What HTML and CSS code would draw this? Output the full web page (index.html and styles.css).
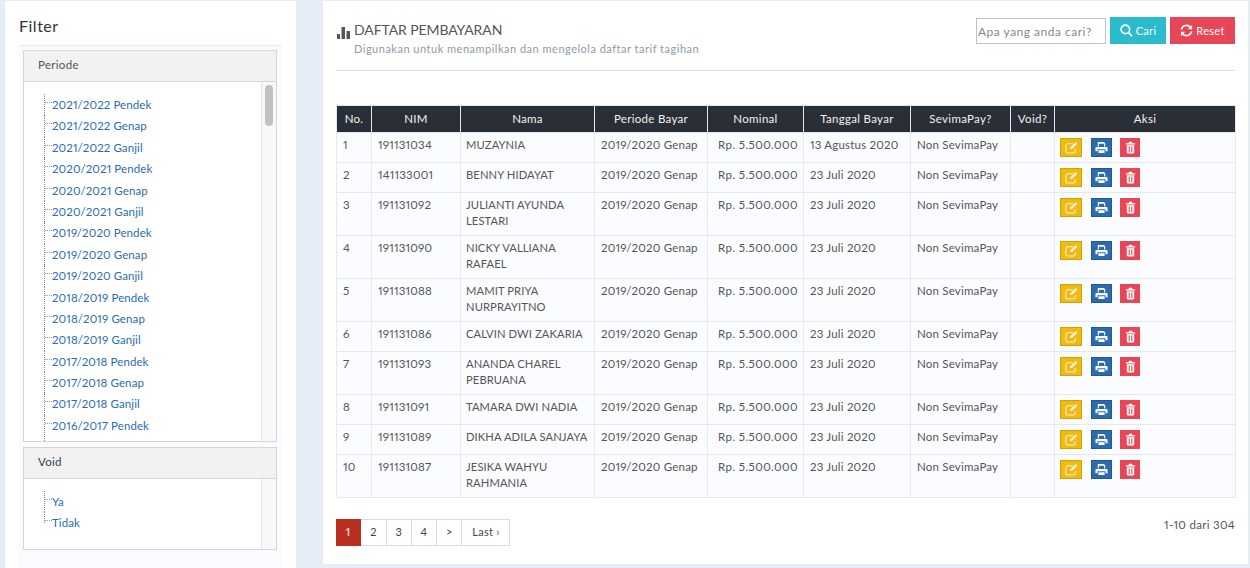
FILE: index.html
```html
<!DOCTYPE html>
<html lang="id">
<head>
    <meta charset="UTF-8">
    <title>Daftar Pembayaran</title>
    <link rel="stylesheet" href="styles.css">
</head>
<body>
    <svg class="defs" width="0" height="0">
        <symbol id="i-chart" viewBox="0 0 14 14"><path d="M0 9h3v5H0zM4.500 2h3.500v12H4.500zM9.500 6h3.500v8H9.500z"/></symbol>
        <symbol id="i-search" viewBox="0 0 14 14"><path fill="none" stroke="currentColor" stroke-width="1.800" d="M5.800 1.200a4.600 4.600 0 1 0 0 9.200a4.600 4.600 0 1 0 0-9.200zM9.200 9.200l3.800 3.800"/></symbol>
        <symbol id="i-refresh" viewBox="0 0 14 14"><path fill="none" stroke="currentColor" stroke-width="1.700" d="M1.500 6a5.600 5.600 0 0 1 9.800-2.400M12.500 8a5.600 5.600 0 0 1-9.800 2.400"/><path d="M13 1v4.600H8.400zM1 13V8.400h4.600z"/></symbol>
        <symbol id="i-edit" viewBox="0 0 14 14"><path fill="none" stroke="currentColor" stroke-width="1.100" d="M11 8.500V11a2 2 0 0 1-2 2H3a2 2 0 0 1-2-2V5a2 2 0 0 1 2-2h5.500"/><path d="M11.600 1.200l1.700 1.700l-5.800 5.800H5.500V7z"/></symbol>
        <symbol id="i-print" viewBox="0 0 14 14"><path d="M3 1h6.500L11 2.500V6H9.800V3H4.200v3H3zM1.500 6.500h11a1 1 0 0 1 1 1V11h-2.200V9H2.700v2H.5V7.500a1 1 0 0 1 1-1zM3.700 10h6.600v3H3.700z"/></symbol>
        <symbol id="i-trash" viewBox="0 0 14 14"><path d="M5.500 .8h3l.7 1.700H12v1.300H2V2.500h2.800zM3 4.600h8V12a1.500 1.500 0 0 1-1.500 1.500h-5A1.500 1.500 0 0 1 3 12zM5 6v6h1.200V6zM7.800 6v6H9V6z"/></symbol>
    </svg>

    <div class="page">
        <aside class="sidebar">
            <h2 class="filter-title">Filter</h2>
            <div class="filter-body">
                <div class="filter-box">
                    <div class="filter-head">Periode</div>
                    <div class="filter-main filter-main-period">
                        <ul class="tree tree-more">
                            <li><a>2021/2022 Pendek</a></li>
                            <li><a>2021/2022 Genap</a></li>
                            <li><a>2021/2022 Ganjil</a></li>
                            <li><a>2020/2021 Pendek</a></li>
                            <li><a>2020/2021 Genap</a></li>
                            <li><a>2020/2021 Ganjil</a></li>
                            <li><a>2019/2020 Pendek</a></li>
                            <li><a>2019/2020 Genap</a></li>
                            <li><a>2019/2020 Ganjil</a></li>
                            <li><a>2018/2019 Pendek</a></li>
                            <li><a>2018/2019 Genap</a></li>
                            <li><a>2018/2019 Ganjil</a></li>
                            <li><a>2017/2018 Pendek</a></li>
                            <li><a>2017/2018 Genap</a></li>
                            <li><a>2017/2018 Ganjil</a></li>
                            <li><a>2016/2017 Pendek</a></li>
                        </ul>
                        <div class="scroll-track"><div class="scroll-thumb"></div></div>
                    </div>
                </div>
                <div class="filter-box filter-box-void">
                    <div class="filter-head filter-head-void">Void</div>
                    <div class="filter-main filter-main-void">
                        <ul class="tree tree-end">
                            <li><a>Ya</a></li>
                            <li><a>Tidak</a></li>
                        </ul>
                        <div class="scroll-track"></div>
                    </div>
                </div>
            </div>
        </aside>

        <main class="content">
            <div class="content-head">
                <div>
                    <h1 class="page-title"><svg class="icon-chart"><use href="#i-chart"/></svg>DAFTAR PEMBAYARAN</h1>
                    <p class="page-sub">Digunakan untuk menampilkan dan mengelola daftar tarif tagihan</p>
                </div>
                <div class="search">
                    <input class="search-input" type="text" placeholder="Apa yang anda cari?">
                    <button class="btn btn-cari"><svg class="icon"><use href="#i-search"/></svg>Cari</button>
                    <button class="btn btn-reset"><svg class="icon"><use href="#i-refresh"/></svg>Reset</button>
                </div>
            </div>

            <table class="data">
                <colgroup>
                    <col class="c-no"><col class="c-nim"><col class="c-nama"><col class="c-periode"><col class="c-nominal"><col class="c-tanggal"><col class="c-sevima"><col class="c-void"><col class="c-aksi">
                </colgroup>
                <thead>
                    <tr><th>No.</th><th>NIM</th><th>Nama</th><th>Periode Bayar</th><th>Nominal</th><th>Tanggal Bayar</th><th>SevimaPay?</th><th>Void?</th><th>Aksi</th></tr>
                </thead>
                <tbody id="rows"></tbody>
            </table>

            <div class="table-foot">
                <ul class="pager">
                    <li class="active">1</li>
                    <li>2</li>
                    <li>3</li>
                    <li>4</li>
                    <li>&gt;</li>
                    <li class="pager-last">Last ›</li>
                </ul>
                <div class="count">1-10 dari 304</div>
            </div>
        </main>
    </div>

    <script>
    let data = [
        ["191131034", "MUZAYNIA", "13 Agustus 2020"],
        ["141133001", "BENNY HIDAYAT", "23 Juli 2020"],
        ["191131092", "JULIANTI AYUNDA LESTARI", "23 Juli 2020"],
        ["191131090", "NICKY VALLIANA RAFAEL", "23 Juli 2020"],
        ["191131088", "MAMIT PRIYA NURPRAYITNO", "23 Juli 2020"],
        ["191131086", "CALVIN DWI ZAKARIA", "23 Juli 2020"],
        ["191131093", "ANANDA CHAREL PEBRUANA", "23 Juli 2020"],
        ["191131091", "TAMARA DWI NADIA", "23 Juli 2020"],
        ["191131089", "DIKHA ADILA SANJAYA", "23 Juli 2020"],
        ["191131087", "JESIKA WAHYU RAHMANIA", "23 Juli 2020"]
    ];
    let html = "";
    data.forEach(function (r, i) {
        html += "<tr><td>" + (i + 1) + "</td><td>" + r[0] + "</td><td class='name'>" + r[1] + "</td>"
            + "<td>2019/2020 Genap</td><td class='num'>Rp. 5.500.000</td><td>" + r[2] + "</td>"
            + "<td>Non SevimaPay</td><td></td><td class='aksi'><div class='actions'>"
            + "<span class='act act-edit'><svg><use href='#i-edit'/></svg></span>"
            + "<span class='act act-print'><svg><use href='#i-print'/></svg></span>"
            + "<span class='act act-del'><svg><use href='#i-trash'/></svg></span>"
            + "</div></td></tr>";
    });
    document.getElementById("rows").innerHTML = html;
    </script>
</body>
</html>
```

FILE: styles.css
```css
* {
    box-sizing: border-box;
}
html, body {
    height: 568px;
    overflow: hidden;
}
body {
    margin: 0;
    background-color: #e6edf7;
    font-family: 'Lato', sans-serif;
    font-size: 11.500px;
    font-variant-numeric: proportional-nums;
    letter-spacing: 0.3px;
    color: #555;
}
.defs {
    position: absolute;
}
.page {
    display: flex;
    gap: 27px;
    padding: 1px 2px 0 5px;
}

/* filter kiri */
.sidebar {
    width: 291px;
    height: 567px;
    background: white;
    padding: 0 14px;
}
.filter-title {
    margin: 0;
    height: 45px;
    padding-top: 15px;
    border-bottom: 1px solid #e6e8ec;
    font-size: 16px;
    line-height: 20px;
    font-weight: 400;
    letter-spacing: 0.5px;
    color: #333;
}
.filter-body {
    background: #fafbfe;
    height: 522px;
    padding: 4px 5px 0 4px;
}
.filter-box {
    border: 1px solid #d6d6d6;
    background: white;
}
.filter-box-void {
    margin-top: 5px;
}
.filter-head {
    height: 31px;
    padding-left: 14px;
    background: #f2f2f2;
    border-bottom: 1px solid #d6d6d6;
    line-height: 28px;
    color: #555;
}
.filter-head-void {
    color: #2c3e50;
}
.filter-main {
    display: flex;
    overflow: hidden;
}
.filter-main-period {
    height: 359px;
}
.filter-main-void {
    height: 70px;
}
.tree {
    flex: 1;
    list-style: none;
    margin: 0;
    padding: 12px 0 0 20px;
    letter-spacing: 0.1px;
    color: #2a6cb0;
}
.tree li {
    height: 21.400px;
    line-height: 21px;
    padding-left: 7px;
    border-left: 1px dotted #888;
    position: relative;
}
.tree li::before {
    content: "";
    position: absolute;
    left: 0;
    top: 8px;
    width: 7px;
    border-top: 1px dotted #999;
}
.tree-more li:last-child {
    height: 40px;
}
.tree-end li:last-child {
    height: 11px;
}
.scroll-track {
    width: 15px;
    flex: none;
    background: #f8f8f8;
    border-left: 1px solid #e3e3e3;
    padding: 3px 3px 0 3px;
}
.scroll-thumb {
    height: 41px;
    background: #c1c1c1;
    border-radius: 4px;
}

/* konten */
.content {
    width: 925px;
    height: 563px;
    background: white;
    padding: 0 13px;
}
.content-head {
    display: flex;
    justify-content: space-between;
    height: 70px;
    border-bottom: 1px solid #dcdfe3;
    margin-bottom: 34px;
}
.page-title {
    margin: 20px 0 0;
    display: flex;
    align-items: center;
    font-size: 14px;
    line-height: 18px;
    font-weight: 400;
    letter-spacing: -0.1px;
    color: #555;
}
.icon-chart {
    width: 14px;
    height: 14px;
    margin: 3px 3px 0 1px;
    fill: #555;
}
.page-sub {
    margin: 2px 0 0 18px;
    font-size: 11px;
    line-height: 16px;
    letter-spacing: 0.5px;
    color: #8c9ba8;
}
.search {
    display: flex;
    gap: 4px;
    margin-top: 16px;
    align-items: flex-start;
}
.search-input {
    width: 130px;
    height: 26px;
    margin-top: 1px;
    padding: 0 1px;
    border: 1px solid #b9c4d0;
    font-family: inherit;
    font-size: 12px;
    letter-spacing: 0.5px;
}
.search-input::placeholder {
    color: #888;
}
.btn {
    display: flex;
    align-items: center;
    justify-content: center;
    height: 27px;
    padding: 0;
    border: none;
    color: white;
    font-family: inherit;
    font-size: 11px;
    letter-spacing: 0.3px;
}
.btn-cari {
    width: 56px;
    background: #2bbccb;
}
.btn-reset {
    width: 65px;
    background: #e64656;
}
.icon {
    width: 13px;
    height: 13px;
    margin-right: 3px;
    fill: currentColor;
}

.data {
    width: 899px;
    table-layout: fixed;
    border-collapse: collapse;
}
.c-no { width: 35px; }
.c-nim { width: 89px; }
.c-nama { width: 134px; }
.c-periode { width: 113px; }
.c-nominal { width: 96px; }
.c-tanggal { width: 107px; }
.c-sevima { width: 100px; }
.c-void { width: 44px; }
.c-aksi { width: 181px; }
.data th {
    height: 27px;
    padding: 0 0 2px;
    background: #2a2e36;
    border: 1px solid #e3e8f1;
    color: #f2f2f2;
    font-size: 11.500px;
    font-weight: 400;
    text-align: center;
}
.data td {
    padding: 4px 5px 6px 6px;
    border: 1px solid #e3e8f1;
    background: #fbfcff;
    line-height: 16px;
    letter-spacing: 0.2px;
    color: #555;
    vertical-align: top;
}
.data td.name {
    padding-left: 5px;
    font-size: 11.200px;
    letter-spacing: 0.1px;
}
.data td.num {
    text-align: right;
    padding-right: 5px;
    letter-spacing: 0.4px;
}
.data td.aksi {
    padding: 4px 5px 5px;
}
.actions {
    display: flex;
    gap: 9px;
    padding-top: 1px;
}
.act {
    display: flex;
    align-items: center;
    justify-content: center;
    width: 21px;
    height: 19px;
    color: #f4f0e0;
}
.act svg {
    width: 13px;
    height: 13px;
    fill: currentColor;
}
.act-edit {
    width: 22px;
    background: #f0bb11;
    border: 1px solid #d4a300;
}
.act-print {
    margin-right: -1px;
    background: #2b6cb0;
    border: 1px solid #24598f;
    color: white;
}
.act-del {
    width: 20px;
    background: #e64656;
    color: white;
}

.table-foot {
    display: flex;
    justify-content: space-between;
    margin-top: 21px;
}
.pager {
    display: flex;
    list-style: none;
    margin: 0;
    padding: 0;
}
.pager li {
    width: 25.300px;
    height: 27px;
    border: 1px solid #dcdcdc;
    border-left: none;
    text-align: center;
    line-height: 23px;
    font-size: 11px;
    color: #444;
}
.pager li.active {
    background: #b93022;
    border-color: #b93022;
    color: white;
}
.pager li.pager-last {
    width: 48px;
}
.count {
    line-height: 12px;
    color: #555;
}
```
